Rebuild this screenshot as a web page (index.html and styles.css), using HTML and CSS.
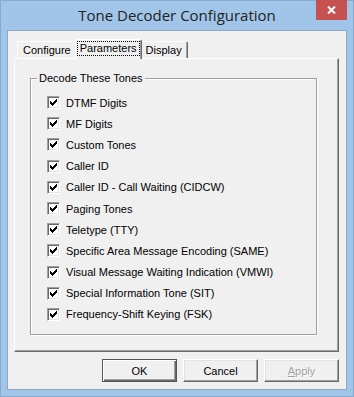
FILE: index.html
```html
<!DOCTYPE html>
<html lang="en">
<head>
    <meta charset="UTF-8">
    <meta name="viewport" content="width=device-width, initial-scale=1.0">
    <title>Tone Decoder Configuration</title>
    <link rel="stylesheet" href="styles.css">
</head>
<body>

    <div class="window">
        <div class="titlebar">
            <span></span>
            <span class="title">Tone Decoder Configuration</span>
            <button class="close" title="Close">
                <svg width="9" height="8" viewBox="0 0 9 8"><path d="M1 0.5 L8 7.5 M8 0.5 L1 7.5" stroke="#fff" stroke-width="2"/></svg>
            </button>
        </div>

        <div class="client">
            <div class="tabs">
                <div class="tab">Configure</div>
                <div class="tab active"><span class="focus">Parameters</span></div>
                <div class="tab">Display</div>
            </div>

            <div class="panel">
                <div class="group">
                    <div class="group-title">Decode These Tones</div>
                    <div class="list" id="list"></div>
                </div>
            </div>

            <div class="buttons">
                <button class="btn default">OK</button>
                <button class="btn">Cancel</button>
                <button class="btn disabled"><u>A</u>pply</button>
            </div>
        </div>
    </div>

    <script>
        const tones = [
            "DTMF Digits",
            "MF Digits",
            "Custom Tones",
            "Caller ID",
            "Caller ID - Call Waiting (CIDCW)",
            "Paging Tones",
            "Teletype (TTY)",
            "Specific Area Message Encoding (SAME)",
            "Visual Message Waiting Indication (VMWI)",
            "Special Information Tone (SIT)",
            "Frequency-Shift Keying (FSK)"
        ];

        const check = '<svg width="7" height="7" viewBox="0 0 7 7" shape-rendering="crispEdges"><path d="M6 0h1v1h-1z M5 1h2v1h-2z M0 2h1v1h-1z M4 2h3v1h-3z M0 3h2v1h-2z M3 3h3v1h-3z M0 4h5v1h-5z M1 5h3v1h-3z M2 6h1v1h-1z" fill="#000"/></svg>';

        document.getElementById("list").innerHTML = tones.map(t => `
            <label class="check"><span class="box">${check}</span>${t}</label>
        `).join("");
    </script>

</body>
</html>
```

FILE: styles.css
```css
body {
    margin: 0;
    font-family: "Liberation Sans", Arial, sans-serif;
    font-size: 11px;
    color: #000;
}
.window {
    width: 354px;
    height: 397px;
    box-sizing: border-box;
    background-color: #a1c5e8;
    border: 1px solid #86aad0;
    padding: 0 6px 6px 6px;
}
.titlebar {
    height: 29px;
    display: grid;
    grid-template-columns: 1fr auto 1fr;
    align-items: start;
}
.title {
    font-family: "Open Sans", "Noto Sans", sans-serif;
    font-size: 15px;
    color: #222;
    line-height: 29px;
    white-space: nowrap;
}
.close {
    justify-self: end;
    margin-top: -1px;
    width: 31px;
    height: 20px;
    border: none;
    padding: 0;
    background-color: #c75050;
    display: flex;
    align-items: center;
    justify-content: center;
}
.client {
    background-color: #f0f0f0;
    border: 1px solid #8ea9c4;
    padding: 8px 7px 0 6px;
    height: 350px;
}
.tabs {
    display: flex;
    align-items: flex-end;
    height: 19px;
    margin-left: 3px;
    position: relative;
    z-index: 1;
}
.tab {
    height: 16px;
    line-height: 16px;
    padding: 0 5px;
    border: 1px solid;
    border-bottom: none;
    border-color: #fff #696969 transparent #fff;
    box-shadow: inset -1px 0 0 #a0a0a0;
    border-radius: 2px 2px 0 0;
    background-color: #f0f0f0;
}
.tab.active {
    margin: 0 -2px -1px -2px;
    padding: 1px 1px 0 1px;
    box-sizing: border-box;
    height: 20px;
    position: relative;
    z-index: 2;
}
.focus {
    display: block;
    border: 1px dotted #000;
    line-height: 13px;
    padding: 0 2px;
}
.panel {
    width: 325px;
    height: 294px;
    box-sizing: border-box;
    border: 1px solid;
    border-color: #fff #696969 #696969 #fff;
    box-shadow: inset -1px -1px 0 #a0a0a0;
    padding: 19px 0 0 15px;
}
.group {
    width: 287px;
    height: 257px;
    box-sizing: border-box;
    border: 1px solid #a0a0a0;
    box-shadow: 1px 1px 0 #fff, inset 1px 1px 0 #fff;
}
.group-title {
    width: fit-content;
    margin: -7px 0 0 6px;
    padding: 0 2px;
    line-height: 13px;
    background-color: #f0f0f0;
}
.list {
    padding: 7px 0 0 16px;
}
.check {
    display: flex;
    align-items: center;
    height: 21.2px;
    gap: 6px;
    white-space: nowrap;
}
.box {
    width: 13px;
    height: 13px;
    box-sizing: border-box;
    background-color: #fff;
    border: 1px solid;
    border-color: #a0a0a0 #fff #fff #a0a0a0;
    box-shadow: inset 1px 1px 0 #696969, inset -1px -1px 0 #e3e3e3;
    display: flex;
    align-items: center;
    justify-content: center;
}
.buttons {
    display: flex;
    justify-content: flex-end;
    gap: 6px;
    margin-top: 7px;
}
.btn {
    width: 75px;
    height: 23px;
    padding: 0;
    font-family: "Liberation Sans", Arial, sans-serif;
    font-size: 11px;
    color: #000;
    background-color: #f0f0f0;
    border: 1px solid;
    border-color: #fff #696969 #696969 #fff;
    box-shadow: inset -1px -1px 0 #a0a0a0, inset 1px 1px 0 #e3e3e3;
}
.btn.default {
    border-color: #555;
    box-shadow: inset 1px 1px 0 #fff, inset -1px -1px 0 #696969, inset -2px -2px 0 #a0a0a0;
}
.btn.disabled {
    color: #a0a0a0;
    text-shadow: 1px 1px 0 #fff;
}
```
